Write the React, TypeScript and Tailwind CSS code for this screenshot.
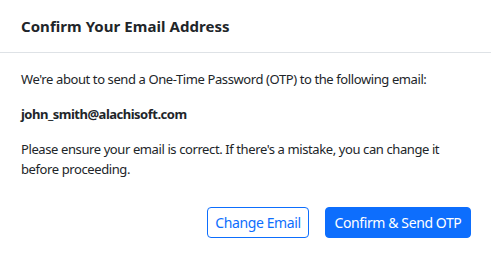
export default function App() {
  return (
    <div className="w-[491px] h-[260px] bg-white text-[#212529] font-['Noto_Sans',sans-serif]">
      <div className="h-[53px] border-b border-[#dee2e6] px-[21px] flex items-center">
        <h1 className="text-[15px] font-bold leading-none tracking-[0.05px]">Confirm Your Email Address</h1>
      </div>
      <div className="px-[21px] pt-[16px] text-[13px] leading-[20px] tracking-[-0.4px]">
        <p>We're about to send a One-Time Password (OTP) to the following email:</p>
        <p className="mt-[15px] font-bold tracking-[-0.5px]">john_smith@alachisoft.com</p>
        <p className="mt-[15px]">Please ensure your email is correct. If there's a mistake, you can change it before proceeding.</p>
      </div>
      <div className="flex justify-end gap-[16px] px-[20px] pt-[28px]">
        <button className="w-[102px] h-[31px] rounded-[4px] border border-[#0d6efd] text-[#0d6efd] text-[14px] tracking-[-0.4px] bg-white">Change Email</button>
        <button className="w-[146px] h-[31px] rounded-[4px] border border-[#0d6efd] bg-[#0d6efd] text-white text-[14px] tracking-[-0.4px]">Confirm &amp; Send OTP</button>
      </div>
    </div>
  );
}
